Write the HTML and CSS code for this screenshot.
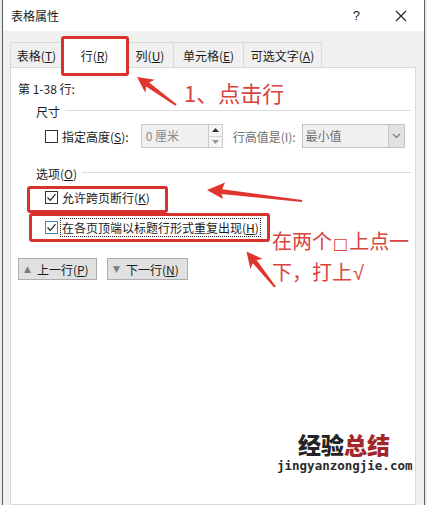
FILE: index.html
```html
<!DOCTYPE html>
<html lang="zh">
<head>
<meta charset="utf-8">
<title>表格属性</title>
<link rel="stylesheet" href="styles.css">
</head>
<body>
<div class="window">
  <div class="titlebar">
    <span class="title">表格属性</span>
    <span class="help">?</span>
    <svg class="close" width="12" height="12" viewBox="0 0 12 12"><path d="M1 1L11 11M11 1L1 11" stroke="#222" stroke-width="1.1" fill="none"/></svg>
  </div>
  <div class="client">
    <div class="tabs">
      <div class="tab t1">表格(<u>T</u>)</div>
      <div class="tab sel t2">行(<u>R</u>)</div>
      <div class="tab t3">列(<u>U</u>)</div>
      <div class="tab t4">单元格(<u>E</u>)</div>
      <div class="tab t5">可选文字(<u>A</u>)</div>
    </div>
    <div class="panel">
      <div class="line">第 1-38 行:</div>
      <div class="legend l1"><span>尺寸</span><i class="rule"></i></div>
      <div class="sizerow">
        <span class="cb"></span>
        <span class="lbl">指定高度(<u>S</u>):</span>
        <span class="input">0 厘米</span>
        <span class="spin">
          <span class="sp up"><svg width="7" height="4" viewBox="0 0 7 4"><path d="M0 4L3.5 0L7 4Z" fill="#333"/></svg></span>
          <span class="sp dn"><svg width="7" height="4" viewBox="0 0 7 4"><path d="M0 0L3.5 4L7 0Z" fill="#999"/></svg></span>
        </span>
        <span class="lbl dis hv">行高值是(I):</span>
        <span class="select"><span class="sv">最小值</span><span class="arr"><svg width="9" height="6" viewBox="0 0 9 6"><path d="M1 1L4.5 4.5L8 1" stroke="#777" stroke-width="1.1" fill="none"/></svg></span></span>
      </div>
      <div class="legend l2"><span>选项(<u>O</u>)</span><i class="rule"></i></div>
      <div class="check c1">
        <span class="cb on"><svg width="11" height="11" viewBox="0 0 11 11"><path d="M1.5 5.5L4.3 8.3L9.5 2.2" stroke="#222" stroke-width="1.2" fill="none"/></svg></span>
        <span class="lbl">允许跨页断行(<u>K</u>)</span>
      </div>
      <div class="check c2">
        <span class="cb on blue"><svg width="11" height="11" viewBox="0 0 11 11"><path d="M1.5 5.5L4.3 8.3L9.5 2.2" stroke="#222" stroke-width="1.2" fill="none"/></svg></span>
        <span class="lbl focus">在各页顶端以标题行形式重复出现(<u>H</u>)</span>
      </div>
      <div class="buttons">
        <span class="btn"><span class="tri">▲</span>上一行(<u>P</u>)</span>
        <span class="btn b2"><span class="tri">▼</span>下一行(<u>N</u>)</span>
      </div>
    </div>
  </div>
</div>

<div class="mark mk1"></div>
<div class="mark mk2"></div>
<div class="mark mk3"></div>
<div class="note n1">1、点击行</div>
<div class="note n2">在两个<span class="sq">□</span>上点一<br>下，打上<span class="ck">√</span></div>
<svg class="arrows" width="427" height="505" viewBox="0 0 427 505">
  <polygon fill="#e0342c" points="137,77 145.3,92.8 146.1,86.6 175.4,105.8 176.6,104.2 149.1,82.6 154.7,79.8"/>
  <polygon fill="#e0342c" points="207,190 223,199 221.6,194 302,202 302,200 222.2,189.2 225,182.5"/>
  <polygon fill="#e0342c" points="246.5,251.5 250.4,269 252.8,263.2 274.2,287.6 275.8,286.4 256.6,260 262.8,259"/>
</svg>
<div class="wm">
  <div class="wm1"><span class="k">经验</span><span class="r">总结</span></div>
  <div class="wm2">jingyanzongjie.com</div>
</div>
</body>
</html>
```

FILE: styles.css
```css
html, body {
  margin: 0;
  padding: 0;
}
body {
  position: relative;
  width: 427px;
  height: 505px;
  overflow: hidden;
  background: #ececec;
  font-family: "Noto Sans CJK SC", "Microsoft YaHei", sans-serif;
  font-size: 12px;
  color: #1b1b1b;
}
u { text-decoration: underline; text-underline-offset: 1px; }

.window {
  margin-left: 2px;
  width: 421px;
  height: 505px;
  border-left: 1px solid #5c5c5c;
  border-right: 1px solid #5c5c5c;
  background: #f0f0f0;
  display: flex;
  flex-direction: column;
}
.titlebar {
  height: 31px;
  background: #ffffff;
  display: flex;
  align-items: center;
  padding-left: 8px;
}
.title { flex: 1; font-size: 12px; }
.help { font-size: 13px; margin-right: 35px; font-family: "Liberation Sans", sans-serif; }
.close { margin-right: 17px; }

.client {
  flex: 1;
  padding: 11px 8px 0 7px;
  display: flex;
  flex-direction: column;
}
.tabs {
  height: 25px;
  display: flex;
  align-items: flex-end;
}
.tab {
  height: 25px;
  box-sizing: border-box;
  border: 1px solid #d9d9d9;
  border-bottom: none;
  border-right: none;
  background: #f0f0f0;
  display: flex;
  align-items: center;
  justify-content: center;
  padding-top: 1px;
}
.t1 { width: 52px; }
.t2 { width: 65px; }
.t3 { width: 46px; }
.t4 { width: 70px; }
.t5 { width: 79px; border-right: 1px solid #d9d9d9; }
.tab.sel {
  height: 30px;
  margin-bottom: -1px;
  background: #ffffff;
  position: relative;
  z-index: 1;
  border-right: 1px solid #d9d9d9;
  padding-top: 4px;
  padding-bottom: 0;
}
.tab.sel + .tab { border-left: none; }

.panel {
  flex: 1;
  background: #ffffff;
  border: 1px solid #d9d9d9;
  padding: 11px 4px 0 7px;
  display: flex;
  flex-direction: column;
}
.line { height: 20px; line-height: 20px; }
.legend {
  height: 20px;
  display: flex;
  align-items: center;
  padding-left: 18px;
}
.legend .rule {
  flex: 1;
  height: 1px;
  background: #dcdcdc;
  margin-left: 5px;
  margin-top: -1px;
}
.l1 { margin-top: 2px; }
.l2 { margin-top: 15px; }

.sizerow {
  margin-top: 3px;
  height: 24px;
  display: flex;
  align-items: center;
  padding-left: 27px;
}
.cb {
  width: 13px;
  height: 13px;
  box-sizing: border-box;
  border: 1px solid #333333;
  background: #ffffff;
  display: inline-flex;
  align-items: center;
  justify-content: center;
  flex: none;
}
.cb.blue { border-color: #3d86c6; }
.cb svg { display: block; }
.lbl { margin-left: 4px; white-space: nowrap; }
.dis { color: #6e6e6e; }
.input {
  margin-left: 12px;
  width: 67px;
  height: 24px;
  box-sizing: border-box;
  border: 1px solid #cccccc;
  border-right: none;
  background: #f0f0f0;
  color: #8a8a8a;
  padding-left: 4px;
  line-height: 22px;
}
.spin {
  width: 15px;
  height: 24px;
  box-sizing: border-box;
  border: 1px solid #cccccc;
  display: flex;
  flex-direction: column;
  background: #f0f0f0;
}
.sp {
  flex: 1;
  display: flex;
  align-items: center;
  justify-content: center;
  background: #f4f4f4;
}
.sp.up { border-bottom: 1px solid #d6d6d6; }
.hv { margin-left: 10px; }
.select {
  margin-left: 6px;
  width: 103px;
  height: 24px;
  box-sizing: border-box;
  border: 1px solid #c3c3c3;
  background: #f0f0f0;
  display: flex;
}
.sv { flex: 1; color: #6e6e6e; padding-left: 3px; line-height: 22px; }
.arr {
  width: 15px;
  background: #e2e2e2;
  border-left: 1px solid #c3c3c3;
  display: flex;
  align-items: center;
  justify-content: center;
}

.check {
  height: 20px;
  display: flex;
  align-items: center;
  padding-left: 27px;
}
.c1 { margin-top: 4px; }
.c2 { margin-top: 10px; }
.focus {
  margin-left: 3px;
  outline: 1px dotted #222;
  outline-offset: 0;
  padding: 0 1px;
  line-height: 17px;
}

.buttons {
  margin-top: 21px;
  display: flex;
  height: 22px;
}
.btn {
  width: 79px;
  height: 22px;
  box-sizing: border-box;
  border: 1px solid #adadad;
  background: #e1e1e1;
  display: flex;
  align-items: center;
  padding-left: 5px;
}
.btn.b2 { margin-left: 10px; width: 81px; }
.tri { color: #7d7d7d; font-size: 9px; margin-right: 6px; font-family: "DejaVu Sans", sans-serif; }

.mark {
  position: absolute;
  border: 3px solid #d8322d;
  border-radius: 3px;
  box-sizing: border-box;
  z-index: 5;
}
.mk1 { left: 61px; top: 36px; width: 68px; height: 40px; }
.mk2 { left: 27px; top: 186px; width: 141px; height: 27px; }
.mk3 { left: 29px; top: 213px; width: 241px; height: 29px; }

.note {
  position: absolute;
  color: #d9443d;
  z-index: 6;
  white-space: nowrap;
}
.n1 { left: 184px; top: 77px; font-size: 22px; line-height: 30px; }
.n2 { left: 272px; top: 227px; font-size: 20px; line-height: 28px; }
.n2 .sq { font-size: 16px; font-family: "DejaVu Sans", sans-serif; margin: 0 1px; }
.n2 .ck { font-family: "Liberation Sans", sans-serif; font-size: 20px; margin-left: 1px; }

.arrows { position: absolute; left: 0; top: 0; z-index: 7; }

.wm { position: absolute; left: 277px; top: 430px; width: 140px; z-index: 6; }
.wm1 {
  margin-left: 21px;
  font-size: 23px;
  font-weight: 900;
  line-height: 28px;
  letter-spacing: 0;
}
.wm1 .k { color: #232323; }
.wm1 .r { color: #a3272a; }
.wm2 {
  font-family: "DejaVu Sans Mono", monospace;
  font-weight: bold;
  font-size: 12.5px;
  line-height: 16px;
  color: #2b2b2b;
}
```
